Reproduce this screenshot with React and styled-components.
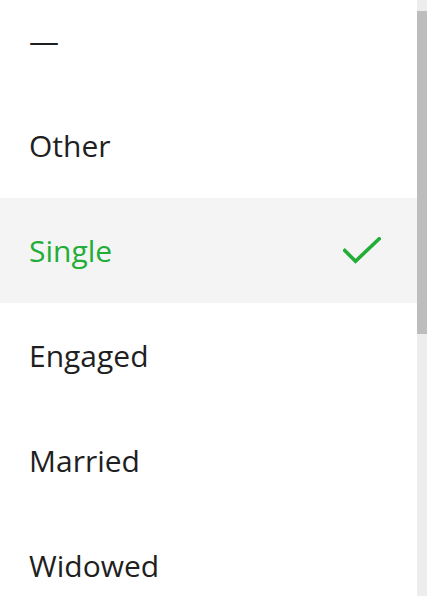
import React from "react";
import styled, { createGlobalStyle } from "styled-components";

const GlobalStyle = createGlobalStyle`
  html, body {
    margin: 0;
    padding: 0;
    background: #ffffff;
    overflow: hidden;
  }
  body {
    font-family: "Open Sans", "Noto Sans", sans-serif;
  }
`;

const Sheet = styled.div`
  display: flex;
  height: 100vh;
  background: #ffffff;
`;

const Viewport = styled.div`
  flex: 1;
  overflow: hidden;
`;

const OptionList = styled.ul`
  list-style: none;
  margin: -12px 0 0;
  padding: 0;
`;

const Option = styled.li`
  display: flex;
  align-items: center;
  justify-content: space-between;
  height: 105px;
  padding: 0 36px 0 29px;
  box-sizing: border-box;
  font-size: 30px;
  color: ${(p) => (p.selected ? "#22ad37" : "#1f1f1f")};
  background: ${(p) => (p.selected ? "#f4f4f4" : "transparent")};
  cursor: pointer;
`;

const Label = styled.span`
  line-height: 1;
`;

const ScrollTrack = styled.div`
  width: 10px;
  flex-shrink: 0;
  background: #ededed;
`;

const ScrollThumb = styled.div`
  margin-top: 11px;
  height: 323px;
  background: #bdbdbd;
`;

const CheckIcon = () => (
  <svg width="38" height="28" viewBox="0 0 38 28" fill="none">
    <path
      d="M1.8 13.5 L12.5 24.2 L36.2 1.8"
      stroke="#22ad37"
      strokeWidth="3.6"
      strokeLinecap="square"
    />
  </svg>
);

const options = [
  "—",
  "Other",
  "Single",
  "Engaged",
  "Married",
  "Widowed",
  "Divorced",
  "Separated",
];

const App = () => (
  <>
    <GlobalStyle />
    <Sheet>
      <Viewport>
        <OptionList>
          {options.map((o) => (
            <Option key={o} selected={o === "Single"}>
              <Label>{o}</Label>
              {o === "Single" && <CheckIcon />}
            </Option>
          ))}
        </OptionList>
      </Viewport>
      <ScrollTrack>
        <ScrollThumb />
      </ScrollTrack>
    </Sheet>
  </>
);

export default App;
